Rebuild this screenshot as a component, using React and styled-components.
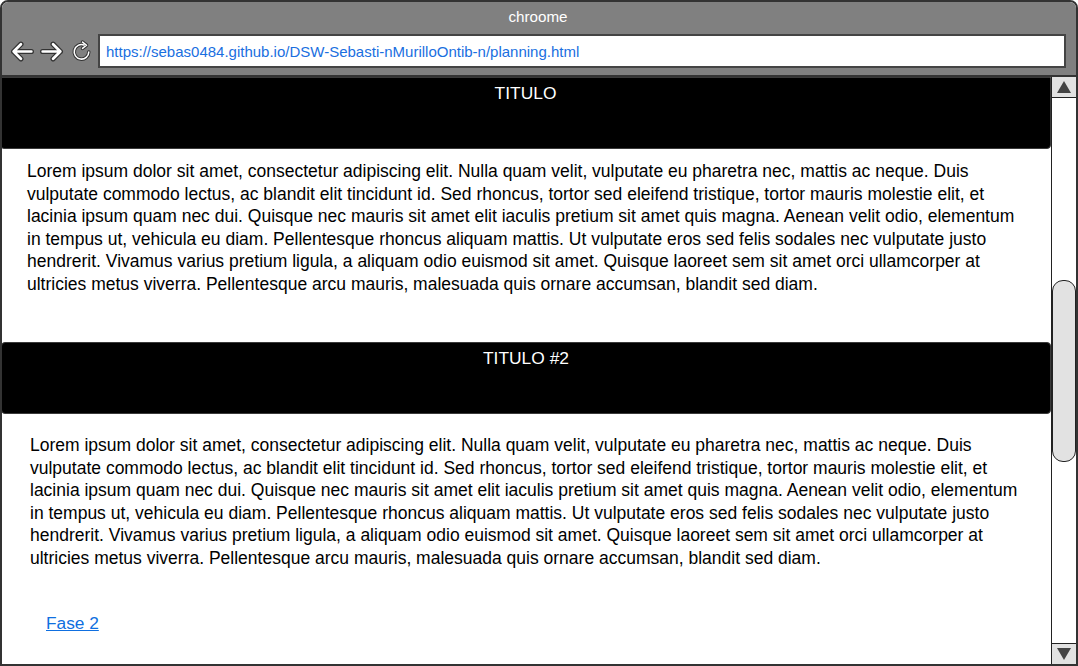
import React from "react";
import styled, { createGlobalStyle } from "styled-components";

const GlobalStyle = createGlobalStyle`
  html, body {
    margin: 0;
    padding: 0;
    background: #ffffff;
    overflow: hidden;
  }
  * { box-sizing: border-box; }
`;

const Window = styled.div`
  width: 1078px;
  height: 666px;
  display: flex;
  flex-direction: column;
  border: 2px solid #333333;
  border-radius: 8px 8px 0 0;
  overflow: hidden;
  background: #ffffff;
  font-family: "Liberation Sans", Arial, sans-serif;
`;

const TopBar = styled.div`
  height: 75px;
  flex: none;
  background: #808080;
  border-bottom: 2px solid #333333;
  display: flex;
  flex-direction: column;
  padding: 0 10px 0 8px;
`;

const WindowTitle = styled.div`
  height: 32px;
  line-height: 30px;
  text-align: center;
  color: #ffffff;
  font-size: 15.2px;
`;

const NavRow = styled.div`
  display: flex;
  align-items: center;
  height: 34px;
`;

const NavIcon = styled.svg`
  width: 25px;
  height: 25px;
  flex: none;
  margin-right: ${(p) => p.gap || 5}px;
`;

const UrlBox = styled.div`
  flex: 1;
  height: 34px;
  background: #ffffff;
  border: 2px solid #444444;
  display: flex;
  align-items: center;
  padding: 0 6px;
  color: #1a6fdf;
  font-size: 15px;
`;

const Body = styled.div`
  flex: 1;
  display: flex;
  min-height: 0;
`;

const Content = styled.div`
  flex: 1;
  min-width: 0;
  overflow: hidden;
  margin-left: -2px;
`;

const Header = styled.div`
  height: ${(p) => p.h}px;
  background: #000000;
  border: 1px solid #3a3a3a;
  border-radius: ${(p) => (p.top ? "0 0 4px 4px" : "4px")};
  margin-left: ${(p) => p.inset || 0}px;
  margin-top: ${(p) => p.mt || 0}px;
  color: #ffffff;
  font-size: 17.4px;
  text-align: center;
  padding-top: 5px;
  line-height: 20px;
`;

const Paragraph = styled.p`
  margin: ${(p) => p.mt}px 0 0 ${(p) => p.left}px;
  width: 996px;
  font-size: 17.5px;
  line-height: 22.5px;
  color: #000000;
`;

const LinkText = styled.a`
  display: inline-block;
  margin: ${(p) => p.mt}px 0 0 ${(p) => p.left}px;
  font-size: 17.3px;
  line-height: 20px;
  color: #0f6fe0;
  text-decoration: underline;
`;

const ScrollTrack = styled.div`
  width: 25px;
  flex: none;
  border-left: 1px solid #222222;
  display: flex;
  flex-direction: column;
  background: #ffffff;
`;

const ArrowBtn = styled.div`
  height: 21px;
  flex: none;
  background: #e2e2e2;
  border-top: ${(p) => (p.down ? "1px solid #222" : "none")};
  border-bottom: ${(p) => (p.down ? "none" : "1px solid #222")};
  display: flex;
  align-items: center;
  justify-content: center;
`;

const Triangle = styled.div`
  width: 0;
  height: 0;
  border-left: 7px solid transparent;
  border-right: 7px solid transparent;
  ${(p) =>
    p.down
      ? "border-top: 12px solid #444;"
      : "border-bottom: 12px solid #444;"}
`;

const TrackSpace = styled.div`
  flex: 1;
  display: flex;
  flex-direction: column;
  padding-top: ${(p) => p.pt}px;
`;

const Thumb = styled.div`
  height: 182px;
  background: #e2e2e2;
  border: 1px solid #222222;
  border-radius: 11px;
`;

const lorem =
  "Lorem ipsum dolor sit amet, consectetur adipiscing elit. Nulla quam velit, vulputate eu pharetra nec, mattis ac neque. Duis vulputate commodo lectus, ac blandit elit tincidunt id. Sed rhoncus, tortor sed eleifend tristique, tortor mauris molestie elit, et lacinia ipsum quam nec dui. Quisque nec mauris sit amet elit iaculis pretium sit amet quis magna. Aenean velit odio, elementum in tempus ut, vehicula eu diam. Pellentesque rhoncus aliquam mattis. Ut vulputate eros sed felis sodales nec vulputate justo hendrerit. Vivamus varius pretium ligula, a aliquam odio euismod sit amet. Quisque laoreet sem sit amet orci ullamcorper at ultricies metus viverra. Pellentesque arcu mauris, malesuada quis ornare accumsan, blandit sed diam.";

const Arrow = ({ dir, gap }) => {
  const d =
    dir === "back"
      ? "M20.5 12 H3.5 M10.5 5 L3.5 12 L10.5 19"
      : "M3.5 12 H20.5 M13.5 5 L20.5 12 L13.5 19";
  return (
    <NavIcon viewBox="0 0 24 24" gap={gap}>
      <path d={d} fill="none" stroke="#333" strokeWidth="5" strokeLinecap="round" strokeLinejoin="round" />
      <path d={d} fill="none" stroke="#fff" strokeWidth="2.6" strokeLinecap="round" strokeLinejoin="round" />
    </NavIcon>
  );
};

const Reload = () => {
  const d = "M19 12.5 A7 7 0 1 1 14.5 5.8";
  const head = "M13 3 L16.8 6 L13 9";
  return (
    <NavIcon viewBox="0 0 24 24" gap={4}>
      <path d={d} fill="none" stroke="#333" strokeWidth="3.4" strokeLinecap="round" />
      <path d={head} fill="none" stroke="#333" strokeWidth="3.4" strokeLinecap="round" strokeLinejoin="round" />
      <path d={d} fill="none" stroke="#fff" strokeWidth="1.5" strokeLinecap="round" />
      <path d={head} fill="none" stroke="#fff" strokeWidth="1.5" strokeLinecap="round" strokeLinejoin="round" />
    </NavIcon>
  );
};

export default function App() {
  return (
    <>
      <GlobalStyle />
      <Window>
        <TopBar>
          <WindowTitle>chroome</WindowTitle>
          <NavRow>
            <Arrow dir="back" gap={4} />
            <Arrow dir="forward" gap={5} />
            <Reload />
            <UrlBox>https://sebas0484.github.io/DSW-Sebasti-nMurilloOntib-n/planning.html</UrlBox>
          </NavRow>
        </TopBar>
        <Body>
          <Content>
            <Header h={72} top>
              TITULO
            </Header>
            <Paragraph mt={11} left={27}>
              {lorem}
            </Paragraph>
            <Header h={72} inset={1} mt={47}>
              TITULO #2
            </Header>
            <Paragraph mt={20} left={30}>
              {lorem}
            </Paragraph>
            <LinkText href="#" mt={44} left={46}>
              Fase 2
            </LinkText>
          </Content>
          <ScrollTrack>
            <ArrowBtn>
              <Triangle />
            </ArrowBtn>
            <TrackSpace pt={182}>
              <Thumb />
            </TrackSpace>
            <ArrowBtn down>
              <Triangle down />
            </ArrowBtn>
          </ScrollTrack>
        </Body>
      </Window>
    </>
  );
}
